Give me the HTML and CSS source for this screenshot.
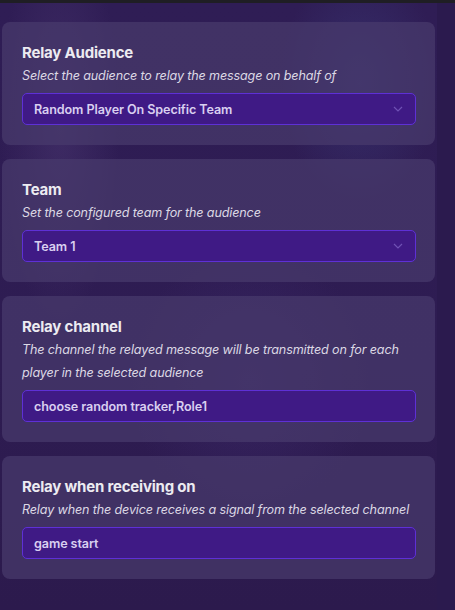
FILE: index.html
```html
<!DOCTYPE html>
<html>
<head>
<meta charset="utf-8">
<link rel="stylesheet" href="styles.css">
</head>
<body>
<div class="topbar"></div>
<div class="page">
  <div class="panel">
    <section class="card">
      <h2 class="title">Relay Audience</h2>
      <p class="desc">Select the audience to relay the message on behalf of</p>
      <div class="field">
        <span>Random Player On Specific Team</span>
        <svg class="chev" width="10" height="6" viewBox="0 0 10 6"><path d="M1 1 L5 5 L9 1" fill="none" stroke="currentColor" stroke-width="1.2"/></svg>
      </div>
    </section>
    <section class="card">
      <h2 class="title">Team</h2>
      <p class="desc">Set the configured team for the audience</p>
      <div class="field">
        <span>Team 1</span>
        <svg class="chev" width="10" height="6" viewBox="0 0 10 6"><path d="M1 1 L5 5 L9 1" fill="none" stroke="currentColor" stroke-width="1.2"/></svg>
      </div>
    </section>
    <section class="card">
      <h2 class="title">Relay channel</h2>
      <p class="desc">The channel the relayed message will be transmitted on for each player in the selected audience</p>
      <div class="field"><span>choose random tracker,Role1</span></div>
    </section>
    <section class="card">
      <h2 class="title">Relay when receiving on</h2>
      <p class="desc">Relay when the device receives a signal from the selected channel</p>
      <div class="field"><span>game start</span></div>
    </section>
  </div>
  <div class="rail"></div>
</div>
</body>
</html>
```
FILE: styles.css
```css
html, body {
  margin: 0;
  padding: 0;
  height: 100%;
}
body {
  background: #2d1b4f;
  font-family: Inter, "Noto Sans", sans-serif;
  overflow: hidden;
}
.topbar {
  height: 3px;
  background: #1f1e24;
}
.page {
  display: flex;
  height: 607px;
  background:
    radial-gradient(ellipse 60px 200px at 60px 120px, rgba(90,70,130,0.35), transparent),
    radial-gradient(ellipse 80px 120px at 360px 80px, rgba(70,80,150,0.35), transparent),
    radial-gradient(ellipse 120px 140px at 250px 380px, rgba(80,60,140,0.25), transparent),
    linear-gradient(180deg, #2f1d55 0%, #2e1c52 60%, #2c1a4d 100%);
}
.panel {
  width: 437px;
  padding: 19px 0 0 2px;
  box-sizing: border-box;
  display: flex;
  flex-direction: column;
  gap: 14px;
}
.rail {
  flex: 1;
  background: #2b1a4e;
}
.card {
  width: 433px;
  box-sizing: border-box;
  padding: 20px 19px 20px 20px;
  background: rgba(72, 58, 108, 0.72);
  border-radius: 8px;
}
.title {
  margin: 0;
  font-size: 15px;
  line-height: 22px;
  font-weight: 700;
  color: #ecebf1;
  letter-spacing: -0.2px;
}
.desc {
  margin: 0 0 6px;
  font-size: 12.6px;
  line-height: 23px;
  font-style: italic;
  color: #dcd8e4;
  letter-spacing: -0.15px;
}
.field {
  height: 32px;
  box-sizing: border-box;
  border: 1.5px solid #5e30d6;
  border-radius: 5px;
  background: #3f1a85;
  display: flex;
  align-items: center;
  justify-content: space-between;
  padding: 0 12px 0 11px;
  color: #d9cff0;
  font-size: 12.6px;
  font-weight: 600;
  letter-spacing: -0.1px;
}
.chev {
  color: #6f51b4;
}
```
